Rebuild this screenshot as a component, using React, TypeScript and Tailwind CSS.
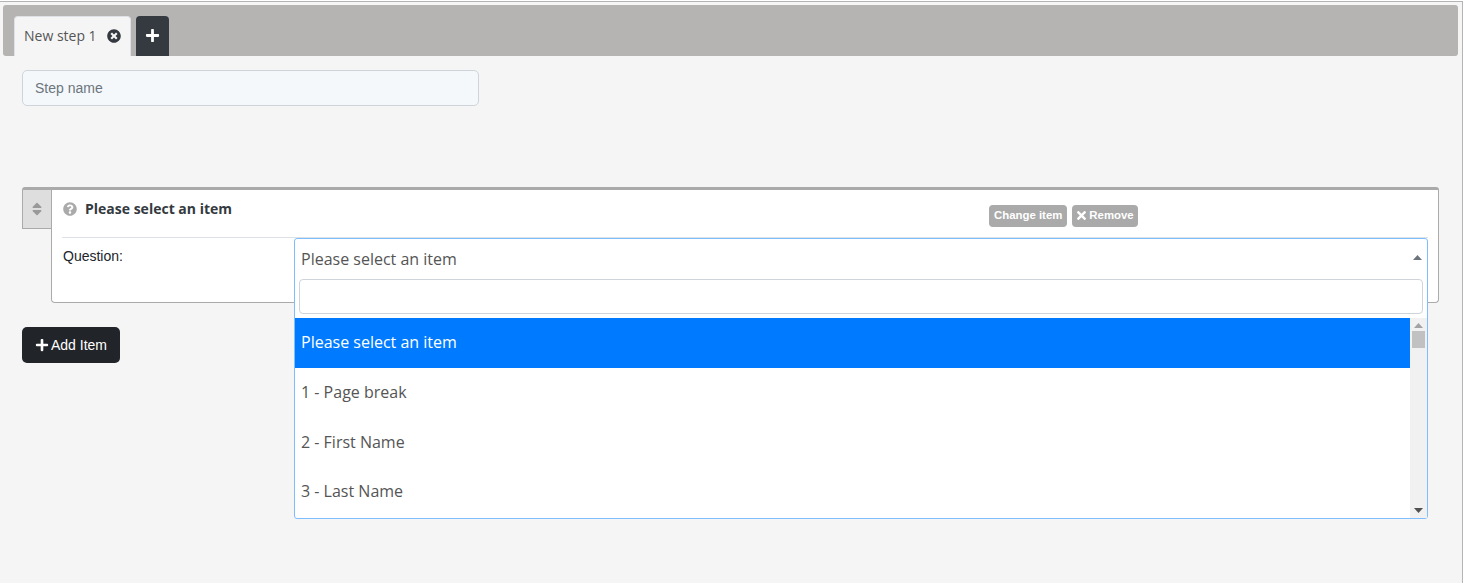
import { FaPlus, FaQuestionCircle, FaSort, FaTimes, FaTimesCircle } from "react-icons/fa";

const items = ["1 - Page break", "2 - First Name", "3 - Last Name"];
const arial = "font-['Liberation_Sans',Arial,sans-serif]";
const open = "font-['Open_Sans',sans-serif]";

export default function App() {
  return (
    <div className={`h-[583px] w-[1464px] overflow-hidden bg-white pt-px pr-px ${arial}`}>
      <div className="h-[582px] border-t-[1px] border-r-[1px] border-[#b4b4b4] bg-[#f5f5f5] pt-[3px] pl-[3px] pr-[3px]">
        <div className="flex h-[51px] w-[1455px] items-end gap-[5px] rounded-[3px] bg-[#b5b4b2] pl-[11px]">
          <div className={`flex h-[40px] w-[117px] items-center rounded-t-[4px] border-x border-t border-[#dee2e6] bg-[#f5f5f5] pb-[2px] pl-[9px] text-[14px] text-[#555555] ${open}`}>
            <span>New step 1</span>
            <FaTimesCircle className="ml-[10px] text-[14px] text-[#343a40]" />
          </div>
          <div className="flex h-[40px] w-[33px] items-center justify-center rounded-t-[4px] bg-[#343a40] pb-[2px] text-white">
            <FaPlus className="text-[15px]" />
          </div>
        </div>
        <div className="ml-[19px] mt-[14px] flex h-[36px] w-[457px] items-center rounded-[5px] border border-[#ced4da] bg-[#f4f8fb] pl-[12px] text-[14px] text-[#6c757d]">
          Step name
        </div>
        <div className="relative ml-[19px] mt-[81px] w-[1417px]">
          <div className="flex items-start rounded-t-[3px] border-t-[3px] border-[#aaaaaa]">
            <div className="flex h-[39px] w-[29px] items-center justify-center border-b border-l border-[#aaaaaa] bg-[#dedede] text-[#999999]">
              <FaSort className="text-[16px]" />
            </div>
            <div className="h-[113px] flex-1 rounded-b-[4px] border-x border-b border-[#aaaaaa] bg-white px-[10px]">
              <div className="h-[48px] border-b border-[#dee2e6]">
                <div className={`flex items-center pt-[8px] text-[14px] font-bold text-[#343a40] ${open}`}>
                  <FaQuestionCircle className="mr-[8px] ml-px text-[14px] text-[#aaaaaa]" />
                  <span>Please select an item</span>
                </div>
              </div>
              <div className="pl-px pt-[10px] text-[14px] leading-[17px] text-[#212529]">Question:</div>
            </div>
          </div>
          <div className="absolute left-[967px] top-[18px] flex gap-[5px] text-[11.4px] font-bold text-white">
            <span className="flex h-[22px] items-center rounded-[4px] bg-[#aaaaaa] px-[5px] pb-px">Change item</span>
            <span className="flex h-[22px] items-center rounded-[4px] bg-[#aaaaaa] pl-[5px] pr-[4px] pb-px">
              <FaTimes className="mr-[3px] h-[13px] w-[9px]" />
              Remove
            </span>
          </div>
          <div className={`absolute left-[272px] top-[51px] h-[281px] w-[1134px] rounded-[3px] border border-[#80bdff] bg-white text-[#555555] ${open}`}>
            <div className="relative flex h-[40px] items-center pl-[6px] text-[16px]">
              Please select an item
              <svg className="absolute right-[5px] top-[16px]" width="9" height="5" viewBox="0 0 9 5">
                <path d="M0 5 L4.5 0 L9 5 Z" fill="#6c757d" />
              </svg>
            </div>
            <div className="mx-[4px] h-[35px] rounded-[4px] border border-[#ced4da] bg-white" />
            <div className="mt-[4px] flex h-[200px]">
              <div className="flex-1 overflow-hidden text-[16px]">
                <div className="flex h-[50px] items-center bg-[#007bff] pb-[2px] pl-[6px] text-white">Please select an item</div>
                {items.map((item) => (
                  <div key={item} className="flex h-[49.7px] items-center pb-[2px] pl-[6px]">
                    {item}
                  </div>
                ))}
              </div>
              <div className="flex w-[17px] flex-col items-center justify-between bg-[#f1f1f1] pb-[5px] pt-[5px]">
                <svg width="9" height="5" viewBox="0 0 9 5">
                  <path d="M0 5 L4.5 0 L9 5 Z" fill="#a3a3a3" />
                </svg>
                <div className="mt-[3px] h-[17px] w-[13px] bg-[#c1c1c1]" />
                <div className="flex-1" />
                <svg width="9" height="5" viewBox="0 0 9 5">
                  <path d="M0 0 L9 0 L4.5 5 Z" fill="#505050" />
                </svg>
              </div>
            </div>
          </div>
        </div>
        <div className="ml-[19px] mt-[24px] flex h-[36px] w-[98px] items-center rounded-[5px] bg-[#212529] pl-[13px] text-[14px] text-white">
          <FaPlus className="mr-[2px] text-[14px]" />
          Add Item
        </div>
      </div>
    </div>
  );
}
